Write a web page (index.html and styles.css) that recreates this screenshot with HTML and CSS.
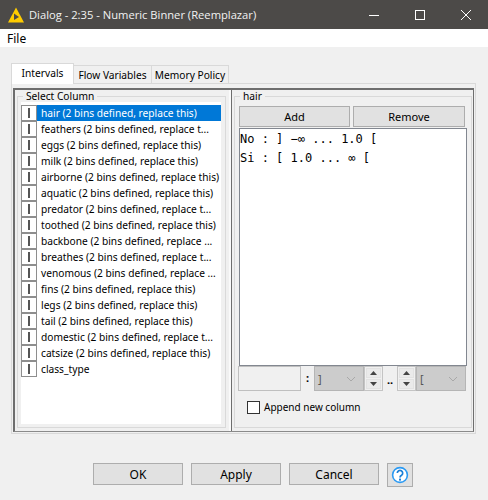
FILE: index.html
```html
<!DOCTYPE html>
<html>
<head>
<meta charset="utf-8">
<title>Dialog</title>
<link rel="stylesheet" href="styles.css">
</head>
<body>
<div class="window">
  <header class="titlebar">
    <svg class="logo" width="16" height="16" viewBox="0 0 16 16"><path d="M8 .5 16 15.5H0Z" fill="#ffcc00"/><path d="M6 6.5 11 10 6 13Z" fill="#4c4a48"/></svg>
    <span class="title">Dialog - 2:35 - Numeric Binner (Reemplazar)</span>
    <div class="winctl">
      <svg width="12" height="12" viewBox="0 0 12 12"><path d="M1 6.5H11" stroke="#fff" fill="none"/></svg>
      <svg width="12" height="12" viewBox="0 0 12 12"><rect x="1.5" y="1.5" width="9" height="9" stroke="#fff" fill="none"/></svg>
      <svg width="12" height="12" viewBox="0 0 12 12"><path d="M1 1 11 11M11 1 1 11" stroke="#fff" fill="none"/></svg>
    </div>
  </header>
  <nav class="menubar">File</nav>
  <main class="content">
    <div class="tabs">
      <div class="tab active">Intervals</div>
      <div class="tab tab-flow">Flow Variables</div>
      <div class="tab tab-mem">Memory Policy</div>
    </div>
    <div class="panel">
      <div class="panel-inner">
        <section class="left">
          <fieldset class="group">
            <legend>Select Column</legend>
            <ul class="list">
              <li class="row selected"><span class="tag"><i></i></span><span class="label">hair (2 bins defined, replace this)</span></li>
              <li class="row"><span class="tag"><i></i></span><span class="label">feathers (2 bins defined, replace t...</span></li>
              <li class="row"><span class="tag"><i></i></span><span class="label">eggs (2 bins defined, replace this)</span></li>
              <li class="row"><span class="tag"><i></i></span><span class="label">milk (2 bins defined, replace this)</span></li>
              <li class="row"><span class="tag"><i></i></span><span class="label">airborne (2 bins defined, replace this)</span></li>
              <li class="row"><span class="tag"><i></i></span><span class="label">aquatic (2 bins defined, replace this)</span></li>
              <li class="row"><span class="tag"><i></i></span><span class="label">predator (2 bins defined, replace t...</span></li>
              <li class="row"><span class="tag"><i></i></span><span class="label">toothed (2 bins defined, replace this)</span></li>
              <li class="row"><span class="tag"><i></i></span><span class="label">backbone (2 bins defined, replace ...</span></li>
              <li class="row"><span class="tag"><i></i></span><span class="label">breathes (2 bins defined, replace t...</span></li>
              <li class="row"><span class="tag"><i></i></span><span class="label">venomous (2 bins defined, replace ...</span></li>
              <li class="row"><span class="tag"><i></i></span><span class="label">fins (2 bins defined, replace this)</span></li>
              <li class="row"><span class="tag"><i></i></span><span class="label">legs (2 bins defined, replace this)</span></li>
              <li class="row"><span class="tag"><i></i></span><span class="label">tail (2 bins defined, replace this)</span></li>
              <li class="row"><span class="tag"><i></i></span><span class="label">domestic (2 bins defined, replace t...</span></li>
              <li class="row"><span class="tag"><i></i></span><span class="label">catsize (2 bins defined, replace this)</span></li>
              <li class="row"><span class="tag"><i></i></span><span class="label">class_type</span></li>
            </ul>
          </fieldset>
        </section>
        <section class="right">
          <fieldset class="group">
            <legend>hair</legend>
            <div class="actions">
              <button class="btn add">Add</button>
              <button class="btn remove">Remove</button>
            </div>
            <div class="editor">
              <div>No : ] −∞ ... 1.0 [</div>
              <div>Si : [ 1.0 ... ∞ [</div>
            </div>
            <div class="bounds">
              <div class="field"></div>
              <span class="colon">:</span>
              <div class="combo"><span>]</span><svg width="10" height="6" viewBox="0 0 10 6"><path d="M1 1 5 5 9 1" stroke="#a8a8a8" fill="none"/></svg></div>
              <div class="spin"><span><svg width="7" height="4" viewBox="0 0 7 4"><path d="M3.5 0 7 4H0Z" fill="#444"/></svg></span><span><svg width="7" height="4" viewBox="0 0 7 4"><path d="M0 0H7L3.5 4Z" fill="#444"/></svg></span></div>
              <span class="dots">..</span>
              <div class="spin"><span><svg width="7" height="4" viewBox="0 0 7 4"><path d="M3.5 0 7 4H0Z" fill="#444"/></svg></span><span><svg width="7" height="4" viewBox="0 0 7 4"><path d="M0 0H7L3.5 4Z" fill="#444"/></svg></span></div>
              <div class="combo"><span>[</span><svg width="10" height="6" viewBox="0 0 10 6"><path d="M1 1 5 5 9 1" stroke="#a8a8a8" fill="none"/></svg></div>
            </div>
            <label class="append"><span class="check"></span>Append new column</label>
          </fieldset>
        </section>
      </div>
    </div>
    <footer class="footer">
      <button class="btn foot">OK</button>
      <button class="btn foot">Apply</button>
      <button class="btn foot">Cancel</button>
      <button class="btn help"><svg width="18" height="18" viewBox="0 0 18 18"><circle cx="9" cy="9" r="7.4" fill="#fff" stroke="#2b9af3" stroke-width="1.6"/><path d="M6.3 7a2.7 2.7 0 1 1 4.2 2.3C9.4 10 9 10.5 9 11.6" fill="none" stroke="#1c7fd6" stroke-width="1.7"/><rect x="8" y="12.6" width="2" height="2" fill="#1c7fd6"/></svg></button>
    </footer>
  </main>
</div>
</body>
</html>
```
FILE: styles.css
```css
* { box-sizing: border-box; }
html, body { margin: 0; padding: 0; }
body { width: 488px; height: 500px; overflow: hidden; font-family: "Noto Sans", Arial, sans-serif; font-size: 10.2px; color: #000; background: #f0f0f0; }
.window { display: flex; flex-direction: column; height: 500px; }
.titlebar { height: 29px; background: #4c4a48; color: #f2f2f2; display: flex; align-items: center; padding-left: 8px; font-family: "Open Sans", sans-serif; font-size: 11.2px; }
.logo { margin-right: 5px; flex: none; }
.title { flex: 1; white-space: nowrap; }
.winctl { display: flex; gap: 34px; padding-right: 16px; }
.winctl svg { display: block; }
.menubar { height: 18px; background: #fff; padding: 3px 0 0 7px; line-height: 14px; font-size: 12px; }
.content { flex: 1; padding: 16px 12px 0 11px; display: flex; flex-direction: column; }
.tabs { display: flex; height: 20px; }
.tab { height: 18px; margin-top: 2px; line-height: 18px; text-align: center; border: 1px solid #d9d9d9; border-bottom: 0; border-left: 0; background: #f0f0f0; }
.tab.active { width: 63px; height: 21px; margin-top: 0; background: #fff; border-left: 1px solid #d9d9d9; line-height: 18px; position: relative; z-index: 1; }
.tab-flow { width: 78px; }
.tab-mem { width: 77px; }
.panel { height: 351px; border: 1px solid #d9d9d9; padding: 4px 1px 1px 1px; background: #f0f0f0; }
.panel-inner { height: 100%; border: 1px solid #6e6e6e; border-top-width: 2px; border-left-width: 2px; border-bottom-color: #8a8a8a; display: flex; background: #f0f0f0; }
.left { width: 216px; flex: none; padding: 0 3px 3px 2px; border-right: 2px solid #fafafa; }
.right { flex: 1; padding: 0 1px 3px 2px; border-left: 1px solid #6e6e6e; }
.group { height: 100%; margin: 0; padding: 0; border: 1px solid #d9d9d9; min-width: 0; }
.group legend { margin-left: 5px; padding: 0 3px; line-height: 12px; height: 12px; }
.list { list-style: none; margin: 0 0 0 3px; padding: 3px 0 0; height: 322px; width: 200px; background: #fff; }
.row { display: flex; height: 16px; }
.tag { width: 16px; flex: none; border: 1px solid #8e8e8e; background: #fff; display: flex; justify-content: center; align-items: center; }
.tag i { display: block; width: 2px; height: 10px; background: #555; }
.label { flex: 1; padding-left: 4px; line-height: 17px; white-space: nowrap; overflow: hidden; }
.row.selected .label { background: #0078d7; color: #fff; }
.btn { font: inherit; color: #000; background: #e1e1e1; border: 1px solid #adadad; padding: 0; border-radius: 0; }
.actions { display: flex; gap: 3px; padding: 4px 0 0 4px; height: 26px; }
.add { width: 111px; height: 21px; font-size: 11px; }
.remove { width: 112px; height: 21px; font-size: 11px; }
.editor { height: 238px; width: 228px; margin-left: 4px; border: 1px solid #828790; background: #fff; padding: 1px 0 0 0; font-family: "DejaVu Sans Mono", monospace; font-size: 12px; line-height: 19px; }
.bounds { display: flex; align-items: stretch; height: 25px; margin-left: 3px; }
.field { width: 63px; border: 1px solid #bfbfbf; background: #f0f0f0; }
.colon { width: 13px; text-align: center; font-weight: bold; line-height: 24px; font-size: 11px; }
.combo { width: 50px; background: #cccccc; border: 1px solid #b5b5b5; display: flex; align-items: center; justify-content: space-between; padding: 0 7px 0 3px; color: #555; font-size: 11px; }
.spin { width: 19px; border: 1px solid #c4c4c4; background: #f0f0f0; padding: 1px; display: flex; flex-direction: column; gap: 1px; }
.spin span { flex: 1; background: #eaeaea; border: 1px solid #e2e2e2; display: flex; align-items: center; justify-content: center; }
.spin svg { display: block; }
.dots { width: 14px; text-align: center; line-height: 28px; font-weight: bold; font-size: 11px; }
.append { display: flex; align-items: center; gap: 4px; margin: 10px 0 0 12px; line-height: 13px; font-size: 10px; }
.check { width: 13px; height: 13px; background: #fff; border: 1px solid #333; flex: none; }
.footer { display: flex; gap: 8px; margin: 29px 0 0 82px; height: 22px; }
.foot { width: 90px; height: 22px; font-size: 12px; }
.help { width: 26px; height: 24px; display: flex; align-items: center; justify-content: center; }
```
